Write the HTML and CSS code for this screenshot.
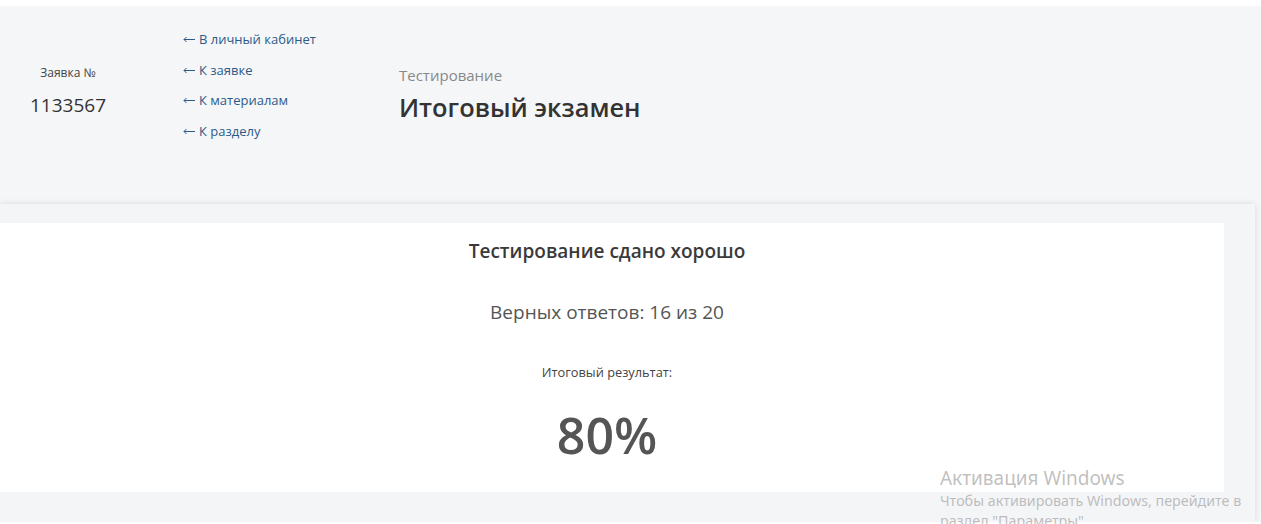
FILE: index.html
```
<!DOCTYPE html>
<html lang="ru">
<head>
    <meta charset="UTF-8">
    <meta name="viewport" content="width=device-width, initial-scale=1.0">
    <title>Итоговый экзамен</title>
    <link rel="stylesheet" href="styles.css">
</head>
<body>
    <div class="page">
        <div class="header">
            <div class="order">
                <div class="order-label">Заявка №</div>
                <div class="order-number">1133567</div>
            </div>
            <div class="back-links">
                <a href="#"><svg class="arrow" width="12" height="7" viewBox="0 0 12 7"><path d="M12 3.5H1M3.5 1L1 3.5 3.5 6" fill="none" stroke="currentColor" stroke-width="1"/></svg>В личный кабинет</a>
                <a href="#"><svg class="arrow" width="12" height="7" viewBox="0 0 12 7"><path d="M12 3.5H1M3.5 1L1 3.5 3.5 6" fill="none" stroke="currentColor" stroke-width="1"/></svg>К заявке</a>
                <a href="#"><svg class="arrow" width="12" height="7" viewBox="0 0 12 7"><path d="M12 3.5H1M3.5 1L1 3.5 3.5 6" fill="none" stroke="currentColor" stroke-width="1"/></svg>К материалам</a>
                <a href="#"><svg class="arrow" width="12" height="7" viewBox="0 0 12 7"><path d="M12 3.5H1M3.5 1L1 3.5 3.5 6" fill="none" stroke="currentColor" stroke-width="1"/></svg>К разделу</a>
            </div>
            <div class="title">
                <div class="title-sub">Тестирование</div>
                <h1>Итоговый экзамен</h1>
            </div>
        </div>

        <div class="panel">
            <div class="result-card">
                <h2>Тестирование сдано хорошо</h2>
                <p class="answers">Верных ответов: 16 из 20</p>
                <p class="total-label">Итоговый результат:</p>
                <p class="total">80%</p>
            </div>
        </div>
    </div>

    <div class="watermark">
        <div class="watermark-title">Активация Windows</div>
        <div>Чтобы активировать Windows, перейдите в</div>
        <div>раздел "Параметры".</div>
    </div>
</body>
</html>
```

FILE: styles.css
```
body {
    margin: 0;
    font-family: "Open Sans", Arial, sans-serif;
    background-color: #fff;
    overflow: hidden;
}

.page {
    margin-top: 6px;
    background-color: #f5f6f8;
}

.header {
    display: flex;
    align-items: flex-start;
    height: 180px;
    padding-top: 18px;
}

.order {
    width: 136px;
    margin-top: 39px;
    text-align: center;
    color: #333;
}

.order-label {
    font-size: 12px;
    line-height: 20px;
    color: #444;
}

.order-number {
    margin-top: 9px;
    font-size: 19px;
    line-height: 26px;
}

.back-links {
    display: flex;
    flex-direction: column;
    width: 216px;
    margin-left: 47px;
}

.back-links a {
    display: flex;
    align-items: center;
    font-size: 13px;
    line-height: 30.5px;
    color: #2c5b88;
    text-decoration: none;
}

.arrow {
    margin-right: 4px;
    margin-top: 1px;
}

.title {
    margin-top: 41px;
}

.title-sub {
    font-size: 15px;
    line-height: 20px;
    color: #888;
}

.title h1 {
    margin: 5px 0 0;
    font-size: 25.4px;
    line-height: 34px;
    font-weight: 600;
    color: #333;
}

.panel {
    margin-right: 6px;
    height: 318px;
    padding-top: 19px;
    box-sizing: border-box;
    background-color: #f4f5f7;
    box-shadow: 0 0 6px rgba(0, 0, 0, 0.12);
}

.result-card {
    width: 1214px;
    height: 269px;
    padding-right: 10px;
    background-color: #fff;
    text-align: center;
    overflow: hidden;
}

.result-card h2 {
    margin: 0;
    padding-top: 14px;
    font-size: 19px;
    line-height: 28px;
    font-weight: 600;
    color: #3a3a3a;
}

.answers {
    margin: 33px 0 0;
    font-size: 19px;
    line-height: 28px;
    color: #555;
}

.total-label {
    margin: 37px 0 0;
    font-size: 12.8px;
    line-height: 18px;
    color: #444;
}

.total {
    margin: 22px 0 0;
    font-size: 50px;
    line-height: 64px;
    font-weight: 600;
    color: #555;
}

.watermark {
    position: absolute;
    left: 940px;
    top: 465px;
    font-family: "Noto Sans", "Open Sans", sans-serif;
    font-size: 14.3px;
    line-height: 20px;
    color: rgba(150, 150, 150, 0.6);
}

.watermark-title {
    font-size: 19px;
    line-height: 26px;
}
```
